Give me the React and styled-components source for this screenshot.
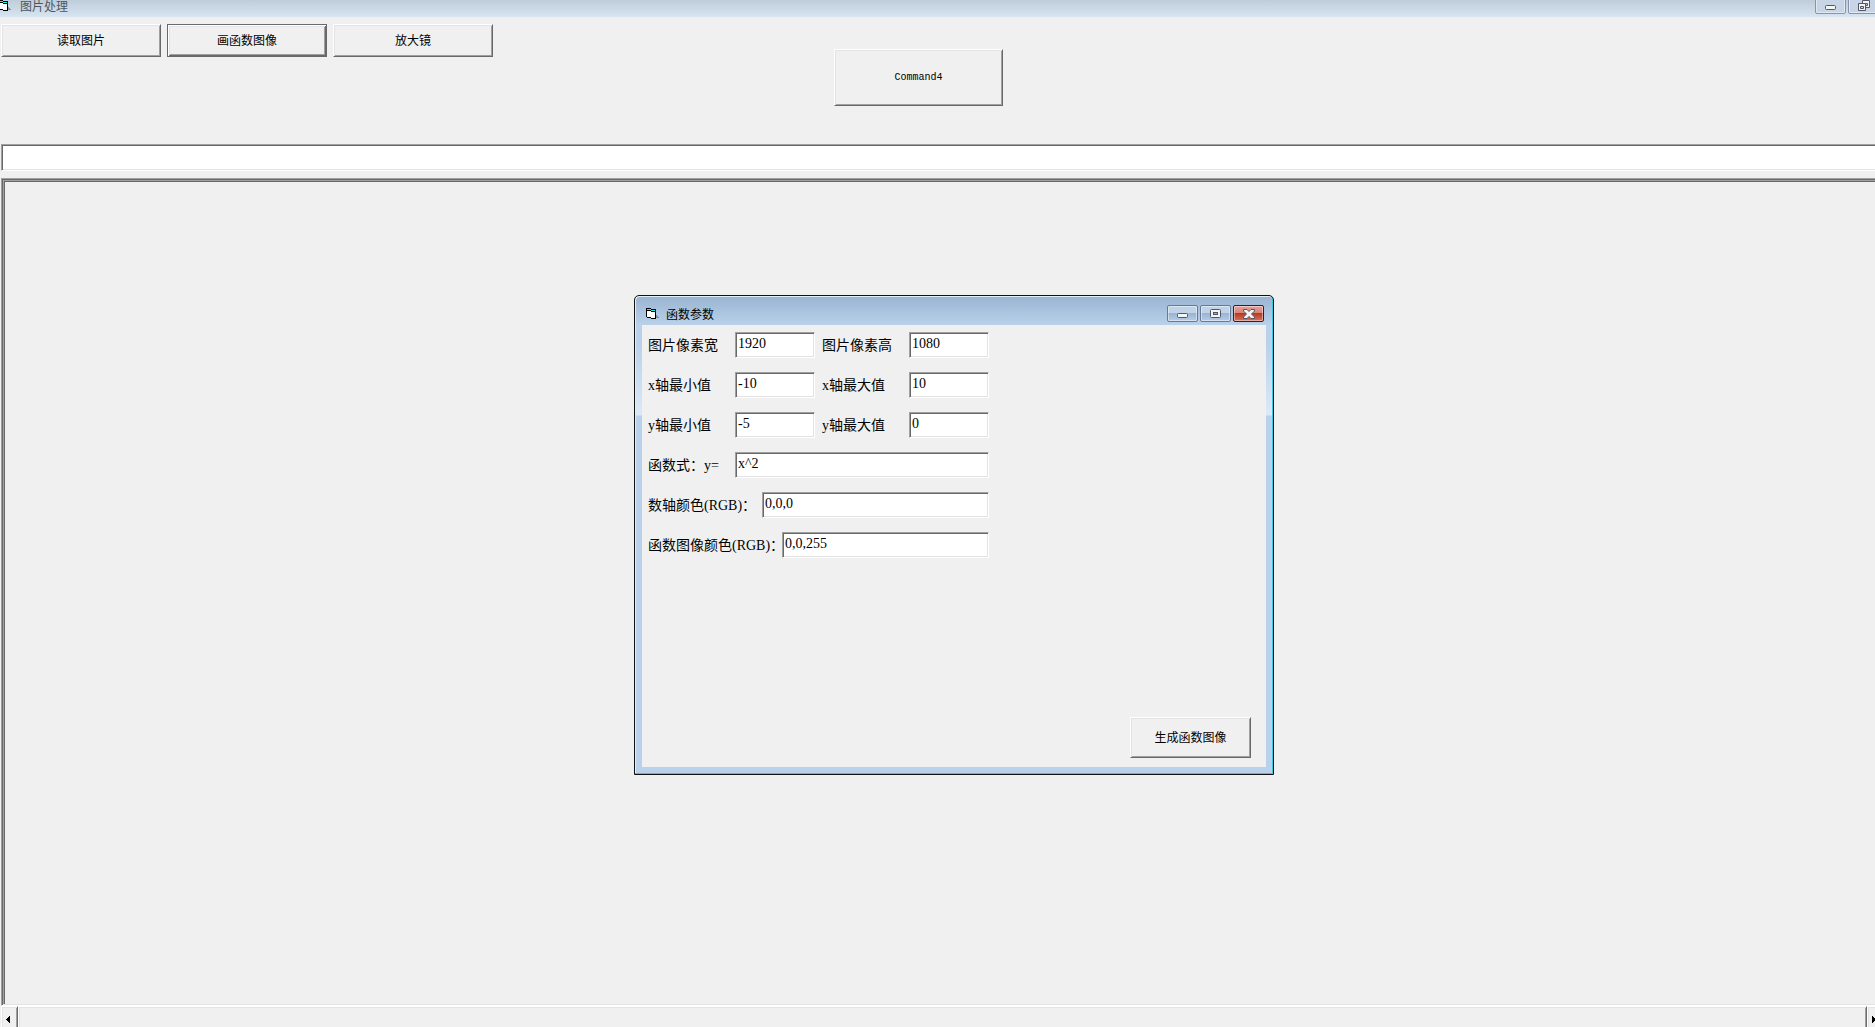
import React from 'react'
import styled, { createGlobalStyle, css } from 'styled-components'

const GlobalStyle = createGlobalStyle`
  *{
    box-sizing:border-box;
  }

  body{
    margin:0;
    overflow:hidden;
    background:#f0f0f0;
    color:#000;
    font:12px/16px 'Liberation Serif','Noto Sans CJK SC',serif;
  }

  button, input{
    font:inherit;
    color:inherit;
  }
`;

const raised = css`
  border:1px solid;
  border-color:#fff #696969 #696969 #fff;
  box-shadow:inset 1px 1px #e3e3e3, inset -1px -1px #a0a0a0;
`;

const sunken = css`
  border:1px solid;
  border-color:#a0a0a0 #fff #fff #a0a0a0;
  box-shadow:inset 1px 1px #696969, inset -1px -1px #e3e3e3;
`;

const Screen = styled.main`
  display:flex;
  flex-direction:column;
  height:100vh;
  overflow:hidden;
`;

const TitleText = styled.h1`
  display:flex;
  align-items:center;
  gap:7px;
  margin:0;
  font:12px/12px 'Noto Sans CJK SC',sans-serif;
  color:#000;
`;

const CaptionButtons = styled.div`
  display:flex;
  gap:2px;
`;

const MainTitle = styled.header`
  display:flex;
  align-items:center;
  justify-content:space-between;
  height:17px;
  padding-bottom:6px;
  background:linear-gradient(#bfcddb, #d7e4f2);

  & ${TitleText}{
    gap:9px;
    margin-left:-2px;
    color:#4c5660;
  }

  & ${CaptionButtons}{
    margin-right:-4px;
  }
`;

const CaptionButton = styled.button`
  display:flex;
  align-items:center;
  justify-content:center;
  width:31px;
  height:17px;
  padding:${props=>props.$low?'4px 0 0':'0'};
  border:1px solid #66799a;
  border-radius:2px;
  background:linear-gradient(#c0d3e8 0 45%, #9bb4d1 50%, #b4cde7);
  box-shadow:inset 0 0 0 1px rgba(255,255,255,0.45);

  ${props=>props.$close && css`
    border-color:#4b1420;
    background:linear-gradient(#e6a298 0, #d98377 45%, #b83a22 50%, #d4745f);
  `}

  ${props=>props.$dim && css`
    border-color:#8593ae;
    background:#c7d5e6;
  `}
`;

const Toolbar = styled.div`
  display:flex;
  align-items:flex-start;
  gap:6px;
  height:127px;
  padding:7px 1px;
`;

const PushButton = styled.button`
  ${raised}
  width:160px;
  height:33px;
  padding:0;
  background:#f0f0f0;

  ${props=>props.$focused && css`
    border-color:#696969;
    box-shadow:inset 1px 1px #fff, inset -1px -1px #696969, inset 2px 2px #e3e3e3, inset -2px -2px #a0a0a0;
  `}
`;

const CommandButton = styled(PushButton)`
  width:169px;
  height:57px;
  margin:25px 0 0 335px;
  font:10px/16px 'Liberation Mono',monospace;
`;

const PathInput = styled.input`
  ${sunken}
  height:27px;
  margin-left:1px;
  padding:0 4px;
  border-right:0;
  border-radius:0;
  background:#fff;
  box-shadow:inset 1px 1px #696969, inset 0 -1px #e3e3e3;
  outline:none;
`;

const PictureFrame = styled.section`
  ${sunken}
  display:flex;
  flex:1;
  margin:7px 0 0 1px;
  border-right:0;
  box-shadow:inset 1px 1px #696969, inset 0 -1px #e3e3e3;
  padding:1px 0 1px 1px;
`;

const Picture = styled.div`
  ${sunken}
  flex:1;
  border-right:0;
  border-bottom:0;
  box-shadow:inset 1px 1px #696969;
`;

const ScrollBar = styled.div`
  display:flex;
  height:21px;
  margin:0 -9px 0 1px;
`;

const ScrollPart = styled.button`
  ${raised}
  display:flex;
  align-items:center;
  justify-content:center;
  flex:${props=>props.$thumb?'1':'0 0 17px'};
  height:27px;
  padding:0 3px 0 0;
  background:#f0f0f0;
`;

const Dialog = styled.section`
  position:absolute;
  top:295px;
  left:634px;
  display:flex;
  flex-direction:column;
  width:640px;
  height:480px;
  padding:0 7px 7px;
  border:1px solid #111;
  border-radius:5px 5px 0 0;
  background:linear-gradient(#99b4d1, #b9d1ea 29px, #b9d1ea 48px, #dce9f7 119px, #b9d1ea 120px);
  box-shadow:inset -1px -1px #3bc8e4, inset 1px 1px #e4eef8;
`;

const DialogTitle = styled.header`
  display:flex;
  align-items:center;
  justify-content:space-between;
  height:29px;
  padding:6px 2px 0 4px;
`;

const Form = styled.form`
  display:flex;
  flex:1;
  flex-direction:column;
  align-items:flex-start;
  gap:14px;
  padding:7px 15px 9px 6px;
  background:#f0f0f0;
  font-size:14px;
`;

const FieldRow = styled.div`
  display:flex;
  width:341px;
`;

const FieldLabel = styled.label`
  flex:0 0 ${props=>props.$width}px;
  min-width:0;
  padding-top:6px;
  line-height:16px;
  white-space:nowrap;
`;

const FieldInput = styled.input`
  ${sunken}
  flex:1;
  min-width:0;
  height:26px;
  margin-right:${props=>props.$first?'7px':'0'};
  padding:0 2px 3px;
  border-radius:0;
  background:#fff;
  outline:none;
`;

const SubmitButton = styled(PushButton)`
  align-self:flex-end;
  width:121px;
  height:41px;
  margin-top:auto;
  font-size:12px;
`;

const FormIcon = () => (
  <svg width="13" height="11" viewBox="0 0 13 11" shapeRendering="crispEdges" aria-hidden="true">
    <path d="M10 7h1v1h1v1h1v1h-3z" fill="#8a8a8a"/>
    <path d="M0 0h5v1h5v10H5v-1H1V9H0z" fill="#000"/>
    <path d="M1 1h4v1h4v1H5V2H1z" fill="#0ff"/>
    <path d="M1 3h4v1h4v6H5V9H1z" fill="#fff"/>
  </svg>
);

const MinimizeIcon = () => (
  <svg width="11" height="5" viewBox="0 0 11 5" aria-hidden="true">
    <rect x=".5" y=".5" width="10" height="4" rx="1" fill="#f4f4f4" stroke="#535666"/>
  </svg>
);

const MaximizeIcon = () => (
  <svg width="11" height="9" viewBox="0 0 11 9" aria-hidden="true">
    <rect x=".5" y=".5" width="10" height="8" rx="1" fill="#f4f4f4" stroke="#535666"/>
    <rect x="3.5" y="3.5" width="4" height="2" fill="#8fb0d0" stroke="#535666"/>
  </svg>
);

const RestoreIcon = () => (
  <svg width="12" height="11" viewBox="0 0 12 11" aria-hidden="true">
    <path d="M4.5 .5h7v7h-7z" fill="#f4f4f4" stroke="#535666"/>
    <path d="M7.5 3.5h2v2h-2z" fill="#c7d5e6" stroke="#535666"/>
    <path d="M.5 3.5h7v7h-7z" fill="#f4f4f4" stroke="#535666"/>
    <path d="M2.5 6.5h3v2h-3z" fill="#c7d5e6" stroke="#535666"/>
  </svg>
);

const CloseIcon = () => (
  <svg width="12" height="10" viewBox="0 0 12 10" aria-hidden="true">
    <path d="M.5 .5H4l2 2 2-2h3.5V2l-3 3 3 3v1.500H8l-2-2-2 2H.5V8l3-3-3-3z" fill="#f4f4f4" stroke="#535666"/>
  </svg>
);

const Arrow = ({ right }) => (
  <svg width="4" height="7" viewBox="0 0 4 7" shapeRendering="crispEdges" aria-hidden="true">
    <path d={right?'M0 0h1v1h1v1h1v1h1v1H3v1H2v1H1v1H0z':'M4 0H3v1H2v1H1v1H0v1h1v1h1v1h1v1h1z'}/>
  </svg>
);

const rows = [
  [
    { id:'width', label:'图片像素宽', value:'1920', labelWidth:87 },
    { id:'height', label:'图片像素高', value:'1080', labelWidth:87 },
  ],
  [
    { id:'xmin', label:'x轴最小值', value:'-10', labelWidth:87 },
    { id:'xmax', label:'x轴最大值', value:'10', labelWidth:87 },
  ],
  [
    { id:'ymin', label:'y轴最小值', value:'-5', labelWidth:87 },
    { id:'ymax', label:'y轴最大值', value:'0', labelWidth:87 },
  ],
  [{ id:'formula', label:'函数式：y=', value:'x^2', labelWidth:87 }],
  [{ id:'axis', label:'数轴颜色(RGB)：', value:'0,0,0', labelWidth:114 }],
  [{ id:'curve', label:'函数图像颜色(RGB)：', value:'0,0,255', labelWidth:134 }],
];

const App = () => {
  return (
    <Screen>
      <GlobalStyle/>
      <MainTitle>
        <TitleText><FormIcon/>图片处理</TitleText>
        <CaptionButtons>
          <CaptionButton $dim $low aria-label="最小化"><MinimizeIcon/></CaptionButton>
          <CaptionButton $dim aria-label="还原"><RestoreIcon/></CaptionButton>
        </CaptionButtons>
      </MainTitle>
      <Toolbar>
        <PushButton>读取图片</PushButton>
        <PushButton $focused>画函数图像</PushButton>
        <PushButton>放大镜</PushButton>
        <CommandButton>Command4</CommandButton>
      </Toolbar>
      <PathInput type="text" aria-label="路径"/>
      <PictureFrame>
        <Picture/>
      </PictureFrame>
      <ScrollBar>
        <ScrollPart aria-label="向左"><Arrow/></ScrollPart>
        <ScrollPart $thumb aria-label="滑块"/>
        <ScrollPart aria-label="向右"><Arrow right/></ScrollPart>
      </ScrollBar>
      <Dialog>
        <DialogTitle>
          <TitleText as="h2"><FormIcon/>函数参数</TitleText>
          <CaptionButtons>
            <CaptionButton $low aria-label="最小化"><MinimizeIcon/></CaptionButton>
            <CaptionButton aria-label="最大化"><MaximizeIcon/></CaptionButton>
            <CaptionButton $close aria-label="关闭"><CloseIcon/></CaptionButton>
          </CaptionButtons>
        </DialogTitle>
        <Form onSubmit={e=>e.preventDefault()}>
          {rows.map(fields=>(
            <FieldRow key={fields[0].id}>
              {fields.map((field,i)=>(
                <React.Fragment key={field.id}>
                  <FieldLabel htmlFor={field.id} $width={field.labelWidth}>{field.label}</FieldLabel>
                  <FieldInput id={field.id} type="text" defaultValue={field.value} $first={fields.length>1 && i===0}/>
                </React.Fragment>
              ))}
            </FieldRow>
          ))}
          <SubmitButton type="submit">生成函数图像</SubmitButton>
        </Form>
      </Dialog>
    </Screen>
  )
}

export default App
